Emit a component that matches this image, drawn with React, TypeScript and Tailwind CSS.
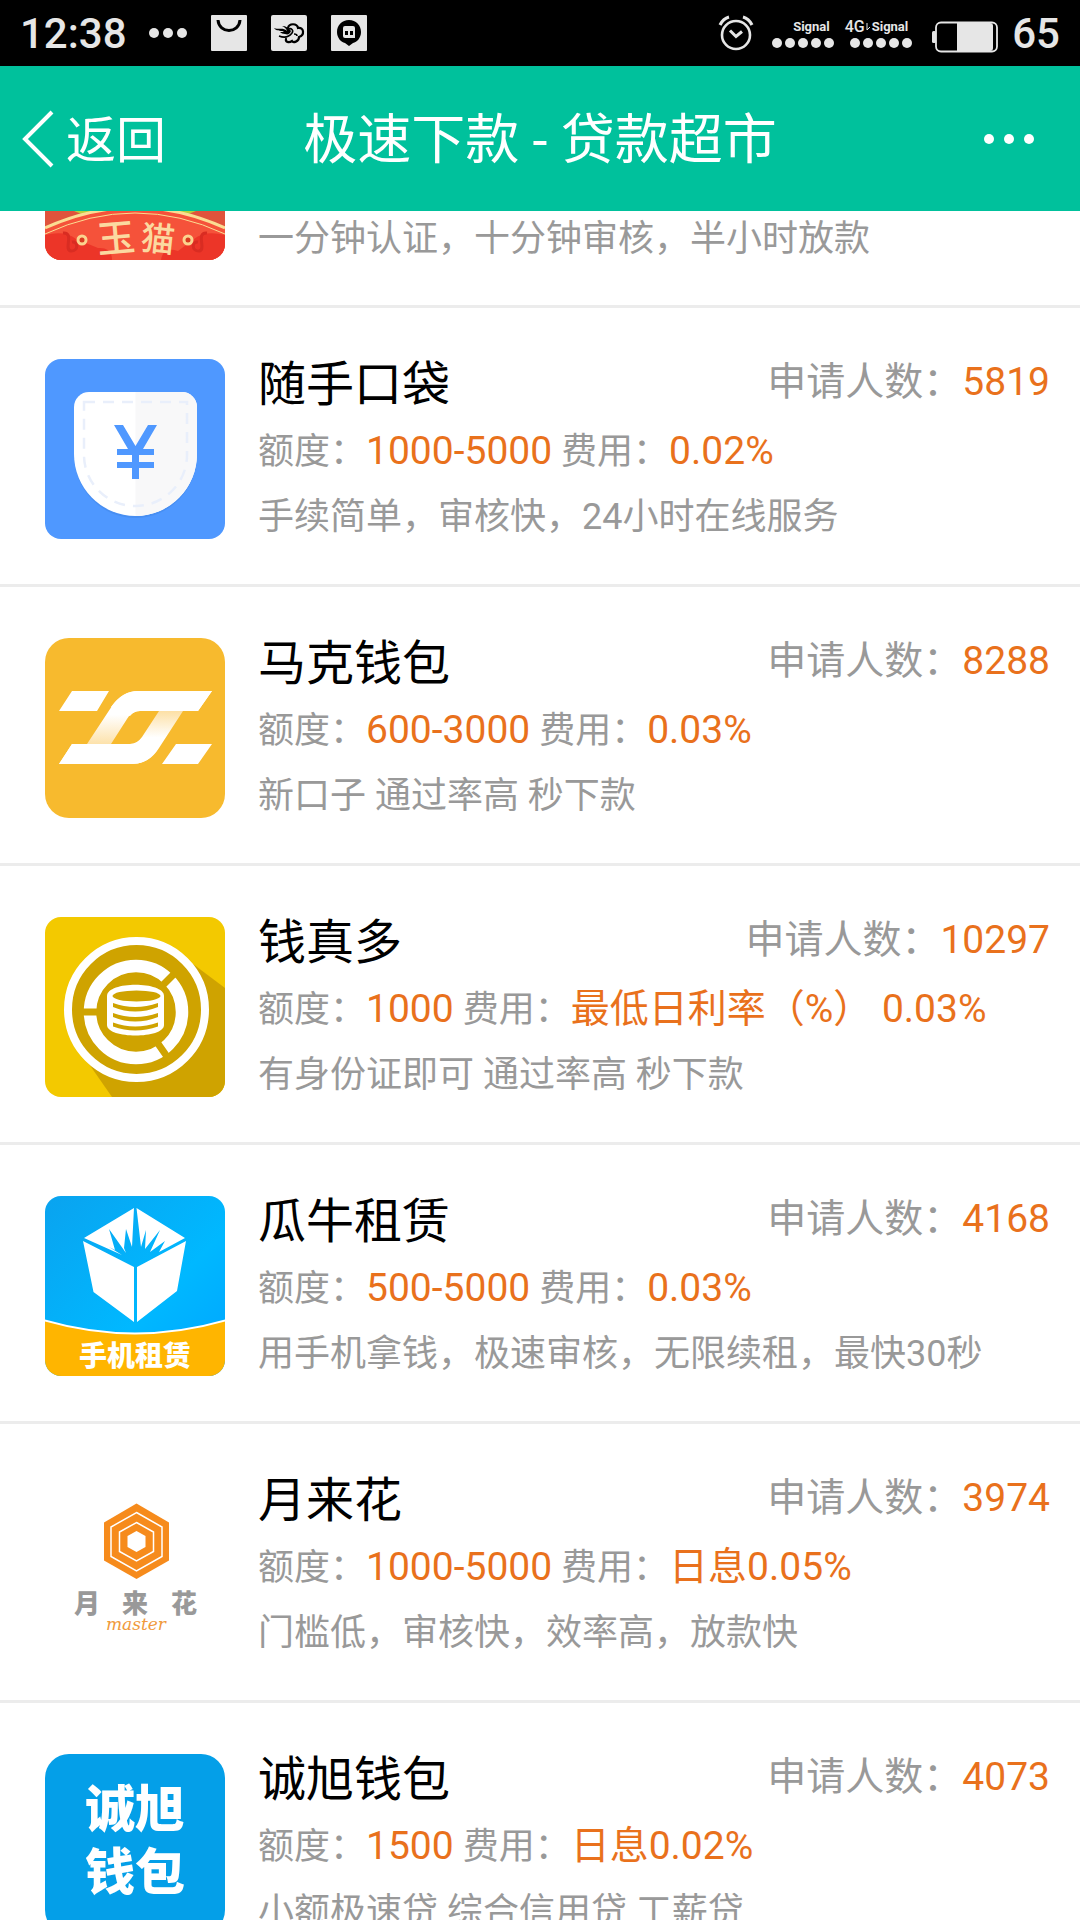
import type { ReactNode } from 'react';

const CJK = "Roboto, 'Noto Sans CJK SC', sans-serif";

function ShoppingIcon() {
  return (
    <svg viewBox="0 0 36 36" className="size-9" aria-hidden="true">
      <rect width="36" height="36" rx="1" fill="#e6e6e6" />
      <path d="M7 5c1 14 21 14 22 0" fill="none" stroke="#000" strokeWidth="3" />
    </svg>
  );
}

function CloudIcon() {
  return (
    <svg viewBox="0 0 36 36" className="size-9" aria-hidden="true">
      <rect width="36" height="36" rx="2" fill="#e6e6e6" />
      <path d="M3 13c6 2 9-1 13 3-1-3-3-4-5-5 4 0 7 2 9 5-1 3-3 4-6 3-2 0-4-1-5-2 2 0 3 0 4-1-4 0-8 0-10-3z" fill="#000" />
      <path d="M17 13c1-5 9-5 10 0 6-1 7 7 1 9 0 5-6 6-7 4-3 2-7 1-6-2" fill="none" stroke="#000" strokeWidth="2.200" strokeLinecap="round" />
      <path d="M8 21c5 2 10 1 13-3 2-3-1-5-3-4M23 19c2 0 3 1 3 2" fill="none" stroke="#000" strokeWidth="1.600" />
    </svg>
  );
}

function HangoutsIcon() {
  return (
    <svg viewBox="0 0 36 36" className="size-9" aria-hidden="true">
      <rect width="36" height="36" rx="1" fill="#e6e6e6" />
      <path d="M18 5c7 0 12 5 12 12 0 6-4 10-8 11l-4 3-4-3c-4-1-8-5-8-11C6 10 11 5 18 5z" fill="#000" />
      <path d="M14 11h8a2 2 0 0 1 2 2v10H14a2 2 0 0 1-2-2v-8a2 2 0 0 1 2-2z" fill="#e6e6e6" />
      <path d="M14 16h3v4h-3zM19 16h3v4h-3z" fill="#000" />
    </svg>
  );
}

function AlarmIcon() {
  return (
    <svg viewBox="0 0 36 36" className="size-9" fill="none" stroke="#e6e6e6" aria-hidden="true">
      <circle cx="18" cy="20" r="14" strokeWidth="2.600" />
      <path d="M12 15.500l6 6 6-5" strokeWidth="3" />
      <path d="M2 10c2-4 5-7 9-8M34 10c-2-4-5-7-9-8" strokeWidth="3.200" />
    </svg>
  );
}

function BatteryIcon() {
  return (
    <svg viewBox="0 0 66 32" className="h-8 w-[66px]" aria-hidden="true">
      <rect x="0" y="10" width="4" height="12" rx="1.500" fill="#e6e6e6" />
      <rect x="4" y="1.500" width="61" height="29" rx="5" fill="#000" stroke="#e6e6e6" strokeWidth="1.800" />
      <path d="M25 2h33q3 0 3 3v22q0 3-3 3H25z" fill="#e6e6e6" />
    </svg>
  );
}

function Signal({ network }: { network?: string }) {
  return (
    <div className="flex flex-col items-end gap-[3px]">
      <div className="flex h-4 items-center justify-end gap-px pr-1 text-[13px] leading-4 font-bold">
        {network && (
          <>
            <span className="text-base leading-4 font-medium">{network}</span>
            <svg viewBox="0 0 5 8" className="h-2 w-[5px]" fill="none" stroke="#e6e6e6" aria-hidden="true">
              <path d="M1 0v7l3-3" />
            </svg>
          </>
        )}
        <span>Signal</span>
      </div>
      <div className="flex gap-[3px]">
        {[0, 1, 2, 3, 4].map((n) => (
          <span key={n} className="size-[10px] rounded-full bg-[#e6e6e6]" />
        ))}
      </div>
    </div>
  );
}

function CatIcon() {
  return (
    <svg viewBox="0 131 180 49" className="h-[49px] w-[180px] shrink-0 rounded-b-2xl" role="img" aria-label="玉猫">
      <rect width="180" height="180" fill="#e0533c" />
      <path d="M29 131h122l-10 4H39z" fill="#b5cf3c" />
      <path d="M0 149Q90 106 180 149V180H0z" fill="#f5523a" />
      <path d="M0 155q20-5 31 4l22 9q14-1 14 12H0zM180 155q-20-5-31 4l-16 12q-15-5-17 9h64z" fill="#ec3528" />
      <path d="M0 148Q90 107 180 148" fill="none" stroke="#fbdc92" strokeWidth="3" />
      <path d="M0 154Q90 112 180 154" fill="none" stroke="#fbdc92" strokeWidth="1" />
      <path d="M18 153c12-1 0 17 8 18 8 0 7-10 1-9M162 153c-12-1 0 17-8 18-8 0-7-10-1-9" fill="none" stroke="#d92c22" strokeWidth="3" />
      <circle cx="37" cy="160" r="4" fill="#d93a20" stroke="#fbd38e" strokeWidth="3" />
      <circle cx="143" cy="160" r="4" fill="#d93a20" stroke="#fbd38e" strokeWidth="3" />
      <text x="71" y="172" textAnchor="middle" fontSize="38" fontWeight="500" fill="#fbd9a0" transform="rotate(-5 71 158)">玉</text>
      <text x="113" y="171" textAnchor="middle" fontSize="34" fontWeight="500" fill="#fbd9a0" transform="rotate(6 113 158)">猫</text>
    </svg>
  );
}

function PocketIcon() {
  return (
    <svg viewBox="0 0 180 180" className="size-[180px] rounded-2xl" role="img" aria-label="随手口袋">
      <rect width="180" height="180" fill="#4f98ff" />
      <path d="M44 35h93a15 15 0 0 1 15 15v46a61.500 63 0 0 1-123 0V50a15 15 0 0 1 15-15z" fill="#3f83e3" opacity=".45" />
      <path d="M44 33h93a15 15 0 0 1 15 15v47a61.500 62 0 0 1-123 0V48a15 15 0 0 1 15-15z" fill="#fff" />
      <path d="M90.500 33H137a15 15 0 0 1 15 15v47a61.500 62 0 0 1-61.500 62z" fill="#f8f8f9" />
      <path d="M39 43h103v53a51.500 51 0 0 1-103 0z" fill="none" stroke="#e9effb" strokeWidth="2.500" strokeDasharray="11 8" />
      <path d="M69 66h9l12.500 21L103 66h9L98 90h11v6H94v7h15v6H94v11h-7v-11H72v-6h15v-7H72v-6h11z" fill="#4f98ff" />
    </svg>
  );
}

function MarkIcon() {
  return (
    <svg viewBox="0 0 180 180" className="size-[180px] rounded-3xl" role="img" aria-label="马克钱包">
      <defs>
        <linearGradient id="markLeft" x1="0" y1="0" x2="0" y2="1">
          <stop offset=".45" stopColor="#fff" />
          <stop offset="1" stopColor="#fde2ab" />
        </linearGradient>
        <linearGradient id="markRight" x1="0" y1="0" x2="0" y2="1">
          <stop offset="0" stopColor="#fde0a5" />
          <stop offset=".5" stopColor="#fff" />
        </linearGradient>
      </defs>
      <rect width="180" height="180" fill="#f7ba2e" />
      <g fill="#fff">
        <path d="M27 53h37L52 73H14zM131 106h36l-14 20h-36z" />
        <path d="M42 106l25-38q11-15 26-15h74l-14 20H95q-8 0-13 8l-16 25z" fill="url(#markLeft)" />
        <path d="M138 73l-24 37q-10 16-27 16H14l13-20h58q7 0 12-7l17-26z" fill="url(#markRight)" />
        <path d="M66 69q11-16 27-16h74l-14 20H95q-6 0-10 5z" />
        <path d="M14 126l13-20h58q7 0 11-5l18 8q-10 17-27 17z" />
      </g>
    </svg>
  );
}

function CoinsIcon() {
  return (
    <svg viewBox="0 0 180 180" className="size-[180px] rounded-2xl" role="img" aria-label="钱真多">
      <rect width="180" height="180" fill="#f3c900" />
      <path d="M148 47l32 24v109H67L44 147z" fill="#cfa300" />
      <circle cx="91.500" cy="92.500" r="68.500" fill="#cfa300" stroke="#fff" strokeWidth="8" />
      <circle cx="91" cy="95" r="46" fill="none" stroke="#fff" strokeWidth="12.500" />
      <path d="M91 95H36M91 95l38-38M91 95l32 46" stroke="#cfa300" strokeWidth="7" />
      <circle cx="91" cy="95" r="39" fill="#cfa300" />
      <path d="M62 79c0-15 57-15 57 0v29c0 14-57 14-57 0z" fill="#fff" />
      <ellipse cx="91.500" cy="79" rx="24" ry="5.500" fill="#cfa300" />
      <path d="M68 86q22 8 45 0v4q-23 9-45 0zM68 96q22 8 45 0v4q-23 9-45 0zM68 105.500q22 8 45 0v4q-23 8-45 0z" fill="#cfa300" />
    </svg>
  );
}

function BoxIcon() {
  return (
    <svg viewBox="0 0 180 180" className="size-[180px] rounded-2xl" role="img" aria-label="瓜牛租赁">
      <defs>
        <linearGradient id="boxSky" x1="0" y1="0" x2="1" y2="1">
          <stop offset="0" stopColor="#0aa3ef" />
          <stop offset=".6" stopColor="#00b8ff" />
          <stop offset="1" stopColor="#00a4ff" />
        </linearGradient>
      </defs>
      <rect width="180" height="180" fill="url(#boxSky)" />
      <g fill="#fff">
        <path d="M38 45l51 26v55L48.500 96zM92 71l49-26-9 50-40 31z" />
        <path d="M39 42l50-30-2 39-6-18-2 19 2 5-17-24 6 21-6-3 13 8z" />
        <path d="M91.500 12L140 42l-26 14 6-11-15 11 10-22-15 19 1-19-5 17z" />
      </g>
      <path d="M-2 124q92 27 184 0v58H-2z" fill="#ffb500" stroke="#fff" strokeWidth="2" />
      <text x="90" y="170" textAnchor="middle" fontSize="28" fontWeight="900" fill="#fff">手机租赁</text>
    </svg>
  );
}

function HexagonIcon() {
  return (
    <svg viewBox="0 0 180 180" className="size-[180px]" role="img" aria-label="月来花">
      <path d="M91.500 28.500L124 47.500v38L91.500 104 59 85.500v-38z" fill="#f68b1c" />
      <path d="M91.500 37.500L117 52v29.500L91.500 96 66 81.500V52zM91.500 47.500L108.500 57v19.500L91.500 86 74.500 76.500V57z" fill="none" stroke="#fff" strokeWidth="1.500" />
      <path d="M91.500 56l9 5v11l-9 5-9-5V61z" fill="#fff" />
      <g fontSize="26" fontWeight="900" fill="#999" textAnchor="middle">
        <text x="42" y="138">月</text>
        <text x="90" y="138">来</text>
        <text x="139" y="138">花</text>
      </g>
      <text x="91" y="155" textAnchor="middle" fontFamily="'DejaVu Serif', serif" fontStyle="italic" fontSize="17" fill="#f09a3c">master</text>
    </svg>
  );
}

function WalletTextIcon() {
  return (
    <svg viewBox="0 0 180 180" className="size-[180px] rounded-3xl" role="img" aria-label="诚旭钱包">
      <rect width="180" height="180" fill="#049fe8" />
      <g fontSize="50" fontWeight="900" fill="#fff" textAnchor="middle">
        <text x="90" y="73">诚旭</text>
        <text x="90" y="136">钱包</text>
      </g>
    </svg>
  );
}

type Loan = {
  name: string;
  applicants: string;
  amount: string;
  fee: string;
  note: string;
  icon: ReactNode;
};

const loans: Loan[] = [
  { name: '随手口袋', applicants: '5819', amount: '1000-5000', fee: '0.02%', note: '手续简单，审核快，24小时在线服务', icon: <PocketIcon /> },
  { name: '马克钱包', applicants: '8288', amount: '600-3000', fee: '0.03%', note: '新口子 通过率高 秒下款', icon: <MarkIcon /> },
  { name: '钱真多', applicants: '10297', amount: '1000', fee: '最低日利率（%） 0.03%', note: '有身份证即可 通过率高 秒下款', icon: <CoinsIcon /> },
  { name: '瓜牛租赁', applicants: '4168', amount: '500-5000', fee: '0.03%', note: '用手机拿钱，极速审核，无限续租，最快30秒', icon: <BoxIcon /> },
  { name: '月来花', applicants: '3974', amount: '1000-5000', fee: '日息0.05%', note: '门槛低，审核快，效率高，放款快', icon: <HexagonIcon /> },
  { name: '诚旭钱包', applicants: '4073', amount: '1500', fee: '日息0.02%', note: '小额极速贷 综合信用贷 工薪贷', icon: <WalletTextIcon /> },
];

function LoanRow({ loan }: { loan: Loan }) {
  return (
    <li className="flex items-start gap-[33px] border-b-3 border-[#ececec] pt-[51px] pr-[30px] pb-[45px] pl-[45px]">
      <div className="shrink-0">{loan.icon}</div>
      <div className="flex min-w-0 flex-1 flex-col text-4xl whitespace-nowrap text-[#999]">
        <div className="flex items-start justify-between">
          <h2 className="text-[48px] leading-[52px] text-black">{loan.name}</h2>
          <p className="text-[39px] leading-[46px]">
            申请人数：<span className="text-[#e9711c]">{loan.applicants}</span>
          </p>
        </div>
        <p className="mt-4 leading-[48px]">
          额度：<span className="text-[39px] text-[#e9711c]">{loan.amount}</span> 费用：
          <span className="text-[39px] text-[#e9711c]">{loan.fee}</span>
        </p>
        <p className="mt-5 leading-[42px]">{loan.note}</p>
      </div>
    </li>
  );
}

export default function App() {
  return (
    <div className="flex h-screen flex-col overflow-hidden bg-white" style={{ fontFamily: CJK }}>
      <div className="flex h-[66px] shrink-0 items-center bg-black px-5 text-[#e6e6e6]">
        <span className="pt-[2px] text-[42px] leading-none font-medium">12:38</span>
        <div className="ml-[22px] flex gap-1">
          {[0, 1, 2].map((n) => (
            <span key={n} className="size-[10px] rounded-full bg-[#e6e6e6]" />
          ))}
        </div>
        <div className="ml-6 flex gap-6">
          <ShoppingIcon />
          <CloudIcon />
          <HangoutsIcon />
        </div>
        <div className="ml-auto flex items-center">
          <AlarmIcon />
          <div className="ml-[18px] flex gap-[11px]">
            <Signal />
            <Signal network="4G" />
          </div>
          <div className="mt-2 ml-5">
            <BatteryIcon />
          </div>
          <span className="ml-[14px] pt-[2px] text-[42px] leading-none font-medium">65</span>
        </div>
      </div>

      <header className="grid h-[145px] shrink-0 grid-cols-[1fr_auto_1fr] items-center bg-[#00c19c] px-[22px] text-white">
        <button type="button" className="flex items-center gap-3 justify-self-start text-[50px] leading-[60px]">
          <svg viewBox="0 0 32 58" className="h-[58px] w-8" fill="none" stroke="currentColor" strokeWidth="4" aria-hidden="true">
            <path d="M30 2L3 29l27 27" />
          </svg>
          <span className="pt-1">返回</span>
        </button>
        <h1 className="pt-1 text-[54px] leading-[60px]">极速下款 - 贷款超市</h1>
        <button type="button" aria-label="更多" className="flex gap-[10px] justify-self-end pr-6">
          {[0, 1, 2].map((n) => (
            <span key={n} className="size-[10px] rounded-full bg-white" />
          ))}
        </button>
      </header>

      <main className="min-h-0 flex-1 overflow-hidden">
        <ul>
          <li className="flex gap-[33px] border-b-3 border-[#ececec] pr-[30px] pb-[45px] pl-[45px]">
            <CatIcon />
            <p className="h-[49px] text-4xl leading-[56px] whitespace-nowrap text-[#999]">一分钟认证，十分钟审核，半小时放款</p>
          </li>
          {loans.map((loan) => (
            <LoanRow key={loan.name} loan={loan} />
          ))}
        </ul>
      </main>
    </div>
  );
}
